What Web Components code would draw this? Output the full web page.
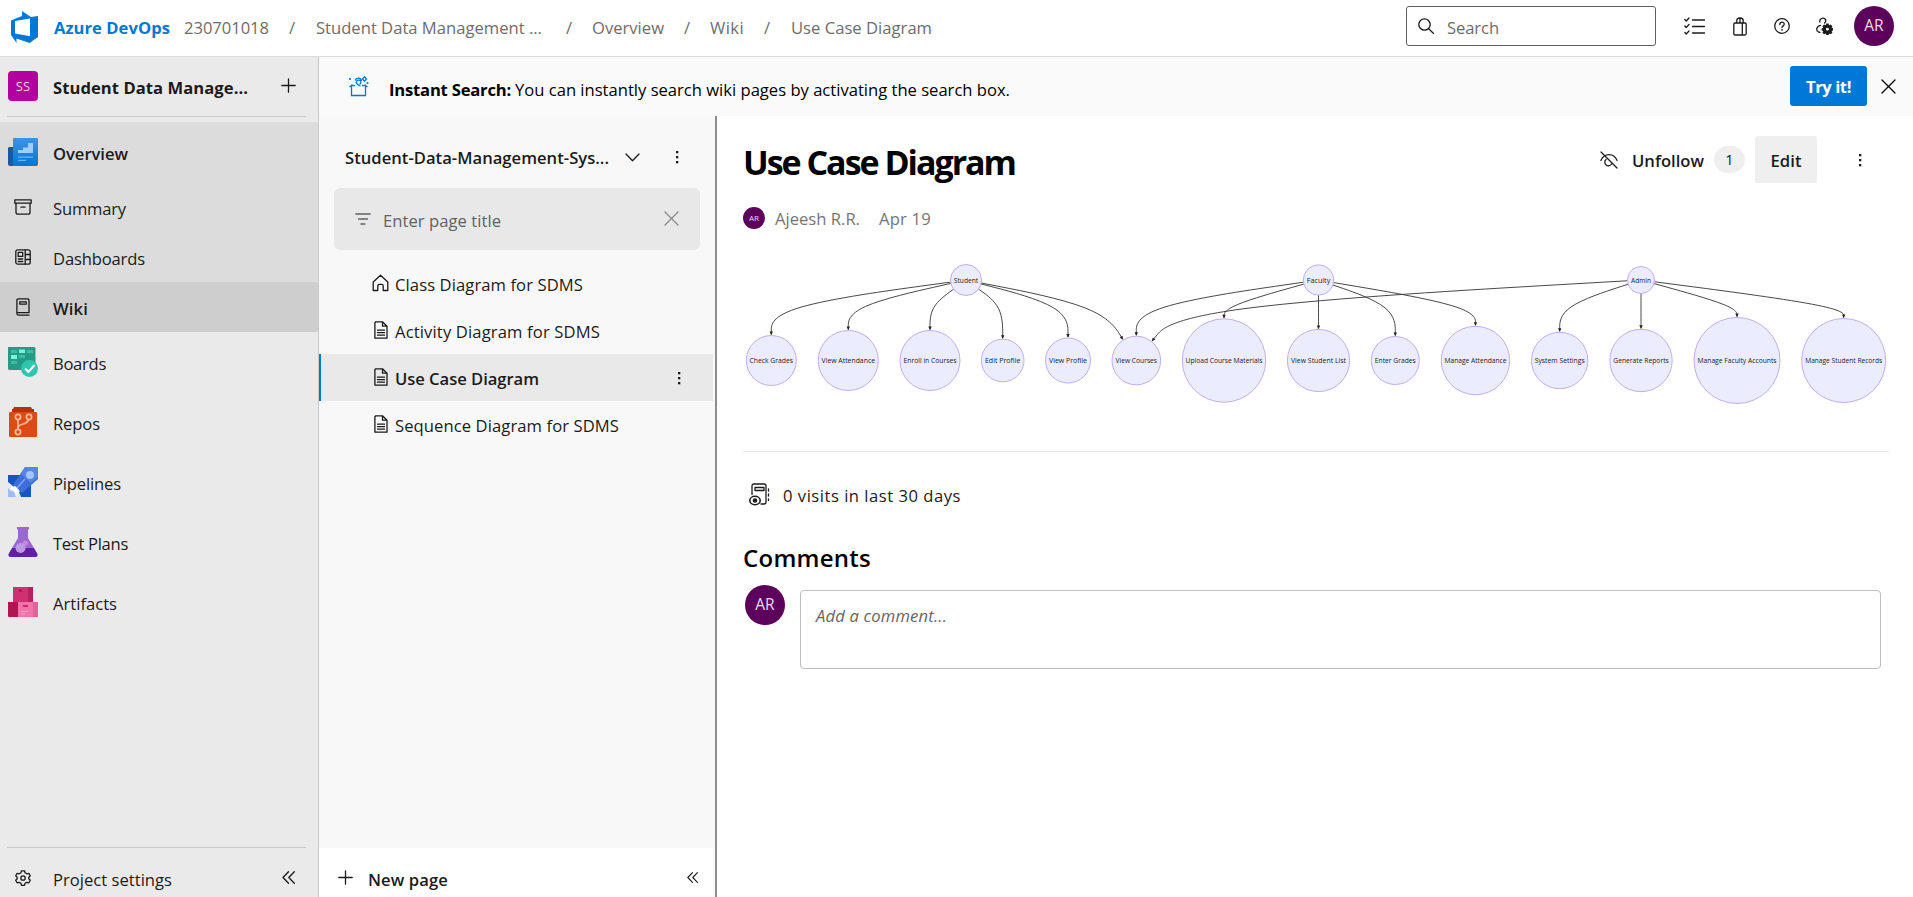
<!DOCTYPE html>
<html lang="en">
<head>
<meta charset="utf-8">
<title>Use Case Diagram - Azure DevOps</title>
<style>
html,body{margin:0;height:100%;overflow:hidden;background:#fff}
body{font-family:"Open Sans","Noto Sans",sans-serif;font-size:16.6px;color:#1b1b1b}
</style>
</head>
<body>
<devops-app></devops-app>
<script>
const define=(name,html,extra)=>{
  const t=document.createElement('template');t.innerHTML=html;
  customElements.define(name,class extends HTMLElement{
    constructor(){super();this.attachShadow({mode:'open'}).appendChild(t.content.cloneNode(true));}
    connectedCallback(){if(extra&&!this.ready){this.ready=true;extra(this,this.shadowRoot);}}
  });
};

/* Text run with a fixed measure: tracking is adjusted so the run fills the width in "w". */
const runs=[];
define('text-run',`<style>:host{display:block;flex:none;white-space:nowrap;line-height:24px;padding-top:var(--drop,3px)}</style><slot></slot>`,
el=>runs.push(el));
const fitRuns=()=>runs.forEach(el=>{
  const w=parseFloat(el.getAttribute('w'));if(!w)return;
  const r=document.createRange();r.selectNodeContents(el);
  const cur=r.getBoundingClientRect().width,n=el.textContent.length;
  el.style.letterSpacing=((w-cur)/n).toFixed(3)+'px';
  el.style.width=w+'px';
});

const S='fill="none" stroke="currentColor" stroke-width="1.3" stroke-linecap="round" stroke-linejoin="round"';
const ICONS={
logo:[27,32,`<path fill="#0078d4" d="M27 5v21l-8.500 6L5.500 27.500V32L0 24V9.500L11 5V0l9 6zM4 10v12.500l15 2.700V7.500z"/>`],
search:[16,16,`<g ${S}><circle cx="6.500" cy="6.500" r="5.700"/><path d="M10.700 10.700 15.300 15.300"/></g>`],
list:[21,18,`<g ${S}><path d="M8.500 3h12M8.500 9.500h12M8.500 16h12"/><path d="M.8 2.500 2.200 4 5 1M.8 9 2.200 10.500 5 7.500M.8 15.500 2.200 17 5 14"/></g>`],
bag:[14,19,`<g ${S}><path d="M2 6h10q1.200 0 1.200 1.200v9.300Q13.200 18 12 18H2Q.8 18 .8 16.500V7.200Q.8 6 2 6zM9.300 6v12M3.800 6V3.500Q3.800 1 7 1t3.200 2.500V6M7 1v5"/></g>`],
help:[16,16,`<g ${S}><circle cx="8" cy="8" r="7.300"/><path d="M5.800 6.500C5.800 3.200 10.400 3.400 10.200 6.300 10.100 7.800 8 8 8 9.600"/></g><circle cx="8" cy="11.800" r=".9" fill="currentColor"/>`],
usergear:[17,18,`<g ${S}><path d="M3.800 5C3.200 1.800 7 0 9 2c1.500 1.600.6 3-.4 4M4.500 8.300C0 9.500-.2 14 2.500 15l1.500.4"/></g><g transform="translate(11.400 12.200)"><path fill="currentColor" d="M-1.200-5.600h2.400l.4 1.700 1.700-.8 1.700 1.700-.8 1.600 1.600.6v2l-1.600.6.8 1.700-1.700 1.600-1.600-.8-.5 1.500h-2.400l-.5-1.500-1.600.8L-5 3.500l.8-1.700-1.600-.6v-2l1.600-.6L-5-3l1.700-1.700 1.700.8z"/><circle r="1.400" fill="#fff"/></g>`],
gift:[21,21,`<g fill="none" stroke="#0078d4" stroke-width="1.300"><path d="M3.500 8.500v11h14v-11M7 9.500H3.500L1.500 11M14 9.500h3.500l2 1.500"/><path d="M12.500 10C7 8 7.500 4.500 10.500 4.200S13.500 8 11.500 8M7 4.500C8.500 1 13 1.500 13.500 5M16.500.8l2 2.200-2 2.200-2-2.200z"/></g><g fill="#0078d4"><circle cx="2" cy="3" r="1.100"/><circle cx="19.500" cy="7" r="1.100"/></g>`],
close:[15,15,`<path ${S} d="M1 1 14 14M14 1 1 14"/>`],
plus:[15,15,`<path ${S} d="M7.500.8v13.400M.8 7.500h13.400"/>`],
chev:[15,9,`<path ${S} d="M1 1 7.500 7.800 14 1"/>`],
dots:[4,14,`<g fill="currentColor"><rect x="1" y="1" width="2.300" height="2.300"/><rect x="1" y="6" width="2.300" height="2.300"/><rect x="1" y="11" width="2.300" height="2.300"/></g>`],
filter:[16,12,`<path ${S} d="M.8 1h14.400M3.500 6h9M6 11h4"/>`],
home:[17,18,`<path ${S} d="M1.200 8 8.500 1.200 15.800 8v8.500h-4.600v-4.500c0-1.200-.5-1.700-1.500-1.700H7.300c-1 0-1.500.5-1.500 1.700v4.500H1.200z"/>`],
doc:[14,18,`<path ${S} d="M1.800.8H8.500L13 5.200v12H.9V1.800zM8.500.8v4.400H13M3.500 9.200h7M3.500 11.700h7M3.500 14.200h7"/>`],
eyeoff:[18,18,`<g ${S}><path d="M1 1l16 16M.9 9.500C3 4.500 6.500 3.700 9 3.700s6 1 8.100 5.800M6 8.500a3.600 3.600 0 1 0 5.500 4.500"/></g>`],
box:[18,16,`<g ${S}><path d="M.8.800h16.400v3.400H.8zM2 4.200v9c0 1.300.8 2 2 2h10c1.200 0 2-.7 2-2v-9M7 8.200h4"/></g>`],
dash:[16,16,`<g ${S}><rect x=".8" y=".8" width="14.400" height="14.400" rx="2"/><path d="M10.200.8v14.400M10.200 5.500h5M10.200 10.500h5M3.200 3.400h4.500v4H3.200zM3.200 10h4.500M3.200 12.500h4.500"/></g>`],
book:[14,18,`<path ${S} d="M13 14.500V2.500Q13 .8 11.500.8H2.600Q.9.800.9 2.500v13Q.9 17.200 2.600 17.200H13M1 14.700h12M3.800 3.800h6.400v2.400H3.800z"/>`],
gear:[16,16,`<g ${S}><path d="M6.500.8h3l.6 2 1.700 1 2.100-.5 1.400 2.500L13.800 7.300v1.500l1.500 1.500-1.400 2.500-2.100-.5-1.700 1-.6 2h-3l-.6-2-1.700-1-2.100.5-1.400-2.500 1.500-1.500V7.300L.7 5.800 2.100 3.300l2.100.5 1.700-1z"/><circle cx="8" cy="8" r="2.200"/></g>`],
fold:[13,13,`<path ${S} d="M6.500.8 1 6.500l5.500 5.700M12.300.8 6.800 6.500l5.500 5.700"/>`],
visits:[22,23,`<g ${S}><path d="M3 11.500V3Q3 1 5 1h10q2 0 2 2v16q0 2-2 2h-3M6 4.500h9v3H6z"/><path d="M19.500 6v2M19.500 11v2M19.500 16v1.500"/><ellipse cx="6" cy="17.500" rx="5.200" ry="4.200" stroke-width="1.600"/></g><circle cx="6" cy="17.500" r="2.300" fill="currentColor"/>`],
overview:[30,30,`<defs><linearGradient id="g" x2="0" y2="1"><stop stop-color="#3f93e4"/><stop offset="1" stop-color="#0078d4"/></linearGradient></defs><path fill="#1759a6" d="M1 10h5v19H2q-2 0-2-2V11z"/><path fill="url(#g)" d="M6 1h23q1 0 1 1v25q0 2-2 2H4q1 0 1-2V2q0-1 1-1z"/><path fill="#9ccdfc" d="M10 13h5v-2.500h5V6h5v10H10z"/><path fill="#6fb2f2" d="M10 19.500h15v1.300H10zM10 22.800h8v1.300h-8z"/>`],
boards:[30,30,`<path fill="#279a85" d="M0 0h26q1.500 0 1.500 1.500V23H1.500Q0 23 0 21.500z"/><path fill="#3bbda3" d="M3 3h6v3H3zM19 3h6v3h-6zM11 8h6v3h-6zM3 14h6v3H3z"/><path fill="#7df2dc" d="M11 2.500h6v3.500h-6zM3 8h6v4H3z"/><circle cx="21.500" cy="21.500" r="8.500" fill="#2cc7ae"/><path d="M17 21.500l3.500 3.500 6-7" fill="none" stroke="#fff" stroke-width="2.200"/>`],
repos:[30,30,`<path fill="#b83204" d="M6 0h17l1 2h2v4H4V2h1z"/><path fill="#dd4a16" d="M2 5h26q1 0 1 1v23q0 1-1 1H2q-1 0-1-1V6q0-1 1-1z"/><g fill="none" stroke="#ffb99b" stroke-width="1.700"><circle cx="10" cy="10" r="2.600"/><circle cx="21" cy="10" r="2.600"/><circle cx="10" cy="25" r="2.600"/><path d="M10 12.500v10M10 20q1-2 5-3t6-4.500"/></g>`],
pipelines:[30,30,`<path fill="#1556bd" d="M0 8h13L6 20 0 15zM11 25l12-9v14H13z"/><path fill="#3c6fdc" d="M17 0h13v12L14 26 5 18z"/><path fill="#5983e5" d="M17 0h13v10l-7 6-10-9z"/><circle cx="22" cy="8" r="4" fill="#a6c4fb"/><path d="M8 22l9-10" stroke="#82a5f2" stroke-width="1.500"/><path fill="#a1bcf4" d="M0 21l3 3q4-1 4 4l1 2H0z"/><path fill="#fff" d="M2 21l5-2 4 4-2 5-4-4z"/>`],
tests:[30,30,`<path fill="#9b68d2" d="M9 0h12v2l-1 1v8l6 10H4l6-10V3L9 2z"/><path fill="#5f20a3" d="M4 21h22l3.500 6q.5 3-2 3h-25Q0 30 .5 27z"/><circle cx="12.500" cy="21" r="5" fill="#bd98e6"/><circle cx="17.500" cy="16" r="2.600" fill="#cb83dc"/>`],
artifacts:[30,30,`<path fill="#cd3172" d="M5 0h20v15H5z"/><path fill="#b52262" d="M20 0h5v15h-5z"/><path fill="#b0164f" d="M0 15h10v15H1q-1 0-1-1z"/><path fill="#f073aa" d="M10 15h20v14q0 1-1 1H10z"/><path fill="#e75f9b" d="M25 15h5v15h-5z"/><path fill="#a51650" d="M10 4q2-3 5 0l-2.500 1zM6 18q2-1 4 0L8 20z"/><path fill="#cb286c" d="M15 18h5v2h-5z"/><path stroke="#ff9fd0" d="M13 24.500h7M13 27h4"/>`]
};
define('ui-icon',`<style>:host{display:block;flex:none}svg{display:block}</style>`,(el,root)=>{
  const [w,h,body]=ICONS[el.getAttribute('name')];
  const W=el.getAttribute('w')||w,H=el.getAttribute('h')||h;
  root.innerHTML+=`<svg width="${W}" height="${H}" viewBox="0 0 ${w} ${h}">${body}</svg>`;
});

define('user-avatar',`<style>:host{display:flex;flex:none;align-items:center;justify-content:center;width:var(--s,40px);height:var(--s,40px);border-radius:50%;background:#5c005c;color:#eddcec;font-size:var(--f,15.5px);line-height:1}</style><slot></slot>`);

define('top-bar',`<style>
:host{display:flex;align-items:center;height:56px;border-bottom:1px solid #dcdcdc;color:#6d6d6d;--drop:0;padding:0 19px 0 11px;background:#fff}
.b{color:#0078d4;font-weight:700;margin-left:16px}
.search{display:flex;align-items:center;box-sizing:border-box;width:250px;height:40px;border:1px solid #5f5f5f;border-radius:3px;padding-left:11px;margin-left:auto;margin-bottom:4px}
.search text-run{margin-left:13px;padding-top:3px}
.i{color:#1b1b1b;margin-bottom:4px}
</style>
<ui-icon name="logo" style="margin-bottom:3px"></ui-icon>
<text-run class="b" w="116">Azure DevOps</text-run>
<text-run w="85" style="margin-left:14px">230701018</text-run>
<text-run w="7" style="margin-left:20px">/</text-run>
<text-run w="226" style="margin-left:20px">Student Data Management ...</text-run>
<text-run w="7" style="margin-left:24px">/</text-run>
<text-run w="72" style="margin-left:19px">Overview</text-run>
<text-run w="7" style="margin-left:20px">/</text-run>
<text-run w="34" style="margin-left:19px">Wiki</text-run>
<text-run w="7" style="margin-left:20px">/</text-run>
<text-run w="141" style="margin-left:20px">Use Case Diagram</text-run>
<div class="search"><ui-icon class="i" style="margin:0 0 1px" name="search"></ui-icon><text-run w="52">Search</text-run></div>
<ui-icon class="i" name="list" style="margin-left:28px"></ui-icon>
<ui-icon class="i" name="bag" style="margin-left:28px"></ui-icon>
<ui-icon class="i" name="help" style="margin-left:27px"></ui-icon>
<ui-icon class="i" name="usergear" style="margin-left:26px"></ui-icon>
<user-avatar style="margin:0 0 4px 21px">AR</user-avatar>`);

define('nav-item',`<style>
:host{display:flex;align-items:center;height:60px;padding-left:8px}
:host([sub]){height:50px}
:host([on]){background:#cecece;border-radius:0 3px 3px 0}
div{width:30px;margin-right:15px;display:flex;justify-content:center}
</style><div><slot name="icon"></slot></div><slot></slot>`);

define('side-nav',`<style>
:host{display:flex;flex-direction:column;width:318px;flex:none;background:#eaeaea;border-right:1px solid #c8c8c8}
.proj{display:flex;align-items:center;height:59px;padding:0 0 2px 8px;box-sizing:border-box;--drop:4px}
.proj text-run{font-weight:700}
.tile{width:30px;height:30px;border-radius:4px;background:#b4009e;color:#f3c9ec;font-size:13px;display:flex;align-items:center;justify-content:center;margin-right:15px;flex:none}
.rule{height:1px;background:#cacaca;margin:0 12px 0 7px;flex:none}
.group{background:#dcdcdc;margin-top:5px}
.sb{font-weight:600}
.foot{margin-top:auto;flex:none}
.set{display:flex;align-items:center;height:49px;padding:11px 0 0 15px;box-sizing:border-box;--drop:4px}
.set .f{margin-left:110px;margin-bottom:1px}
.set text-run{margin-left:22px}
</style>
<div class="proj"><div class="tile">SS</div><text-run w="195">Student Data Manage...</text-run><ui-icon name="plus" style="margin-left:33px"></ui-icon></div>
<div class="rule"></div>
<div class="group">
<nav-item><ui-icon slot="icon" name="overview"></ui-icon><text-run class="sb" w="75">Overview</text-run></nav-item>
<nav-item sub><ui-icon slot="icon" name="box"></ui-icon><text-run w="73">Summary</text-run></nav-item>
<nav-item sub><ui-icon slot="icon" name="dash"></ui-icon><text-run w="92">Dashboards</text-run></nav-item>
<nav-item sub on><ui-icon slot="icon" name="book"></ui-icon><text-run class="sb" w="35">Wiki</text-run></nav-item>
</div>
<nav-item><ui-icon slot="icon" name="boards"></ui-icon><text-run w="53">Boards</text-run></nav-item>
<nav-item><ui-icon slot="icon" name="repos"></ui-icon><text-run w="47">Repos</text-run></nav-item>
<nav-item><ui-icon slot="icon" name="pipelines"></ui-icon><text-run w="68">Pipelines</text-run></nav-item>
<nav-item><ui-icon slot="icon" name="tests"></ui-icon><text-run w="75">Test Plans</text-run></nav-item>
<nav-item><ui-icon slot="icon" name="artifacts"></ui-icon><text-run w="64">Artifacts</text-run></nav-item>
<div class="foot"><div class="rule"></div><div class="set"><ui-icon name="gear"></ui-icon><text-run w="119">Project settings</text-run><ui-icon class="f" name="fold"></ui-icon></div></div>`);

define('tip-banner',`<style>
:host{display:flex;align-items:center;height:59px;flex:none;background:#fafafa;padding:0 17px 0 29px;color:#000}
.b{font-weight:700;margin-left:20px}
.btn{margin-left:auto;width:77px;height:40px;border-radius:3px;background:#0078d7;color:#fff;font-weight:700;display:flex;align-items:center;justify-content:center;--drop:2px}
</style>
<ui-icon name="gift"></ui-icon><text-run class="b" w="122" style="padding-top:7px">Instant Search:</text-run><text-run w="495" style="margin-left:4px;padding-top:7px">You can instantly search wiki pages by activating the search box.</text-run>
<div class="btn" style="margin-top:-1px"><text-run w="45">Try it!</text-run></div><ui-icon name="close" style="margin-left:14px;margin-bottom:1px"></ui-icon>`);

define('tree-item',`<style>
:host{display:flex;align-items:center;height:47px;padding:0 32px 0 53px;box-sizing:border-box}
:host([on]){background:#e9e9e9;box-shadow:inset 2px 0 #0078d4;font-weight:600}
div{width:17px;margin-right:6px;display:flex;justify-content:center;margin-bottom:2px}
.end{margin:0 0 0 auto;width:4px}
</style><div><slot name="icon"></slot></div><slot></slot><div class="end"><slot name="end"></slot></div>`);

define('wiki-tree',`<style>
:host{display:flex;flex-direction:column;width:394px;flex:none;background:#f8f8f8;border-right:2px solid #8d8d8d;padding-right:2px}
.head{display:flex;align-items:center;height:72px;padding:10px 0 0 26px;box-sizing:border-box;font-weight:600}
.filter{display:flex;align-items:center;height:62px;margin:0 13px 10px 15px;border-radius:6px;background:#e8e8e8;padding:0 21px;color:#616161;--drop:4px}
.filter text-run{margin-left:12px}
.foot{margin:auto 0 0;height:49px;background:#fff;display:flex;align-items:center;padding:12px 0 0 19px;box-sizing:border-box;font-weight:600}
</style>
<div class="head"><text-run w="264" style="padding-top:2px">Student-Data-Management-Sys...</text-run><ui-icon name="chev" style="margin-left:16px"></ui-icon><ui-icon name="dots" style="margin-left:35px"></ui-icon></div>
<div class="filter"><ui-icon name="filter" style="margin-bottom:1px"></ui-icon><text-run w="118">Enter page title</text-run><ui-icon name="close" style="margin:0 0 1px auto;color:#8a8a8a"></ui-icon></div>
<tree-item><ui-icon slot="icon" name="home"></ui-icon><text-run w="188">Class Diagram for SDMS</text-run></tree-item>
<tree-item><ui-icon slot="icon" name="doc"></ui-icon><text-run w="205">Activity Diagram for SDMS</text-run></tree-item>
<tree-item on><ui-icon slot="icon" name="doc"></ui-icon><text-run w="144">Use Case Diagram</text-run><ui-icon slot="end" name="dots"></ui-icon></tree-item>
<tree-item><ui-icon slot="icon" name="doc"></ui-icon><text-run w="224">Sequence Diagram for SDMS</text-run></tree-item>
<div class="foot"><ui-icon name="plus" style="margin-bottom:2px"></ui-icon><text-run w="80" style="margin-left:15px">New page</text-run><ui-icon name="fold" w="11" h="11" style="margin:0 15px 3px auto"></ui-icon></div>`);

/* Use case graph: each edge is a B-spline through one bend point at y = 306.5. */
define('usecase-diagram',`<style>:host{display:block;height:185px}svg{display:block}
text{font:500 7.500px "Open Sans",sans-serif;fill:#222;text-anchor:middle}
circle{fill:#ececff;stroke:#bba5ea;stroke-width:.9}.e{fill:none;stroke:#333;stroke-width:.9}.a{fill:#222}</style>`,(el,root)=>{
  const N={s:['Student',966,280,15.5,24.5],f:['Faculty',1318.5,280,15.2,23.5],a:['Admin',1641,280,13.5,20],
  cg:['Check Grades',771.3,360.5,25,43.5],va:['View Attendance',848.3,360.5,30,53.5],ec:['Enroll in Courses',930,360.5,30,53],
  ep:['Edit Profile',1002.7,360.5,21.3,35.5],vp:['View Profile',1068,360.5,22.5,38],vc:['View Courses',1136.3,360.5,24.3,41.5],
  um:['Upload Course Materials',1224,360.5,41.7,77],vs:['View Student List',1318.5,360.5,31.1,55],eg:['Enter Grades',1395.3,360.5,24,41],
  ma:['Manage Attendance',1475.5,360.5,34.2,62],ss:['System Settings',1559.7,360.5,28.2,50],gr:['Generate Reports',1641,360.5,31.2,55.5],
  mf:['Manage Faculty Accounts',1737,360.5,43,79],mr:['Manage Student Records',1843.7,360.5,42,77]};
  const E=['s cg','s va','s ec','s ep','s vp','s vc 1102','f vc','f um','f vs','f eg','f ma','a vc 1180','a ss','a gr','a mf','a mr'];
  const hit=(n,p,g)=>{const dx=p[0]-n[1],dy=p[1]-n[2],d=Math.hypot(dx,dy);return[n[1]+dx/d*(n[3]+g),n[2]+dy/d*(n[3]+g)]};
  let out='';
  E.forEach(s=>{
    const [u,v,x]=s.split(' '),A=N[u],B=N[v],b=[x?+x:B[1],306.5],a=hit(A,b,0),c=hit(B,b,1);
    const m=(i,j,k)=>[0,1].map(q=>(a[q]*i+b[q]*j+c[q]*k)/(i+j+k)).map(z=>z.toFixed(2)).join();
    out+=`<path class="e" d="M${a}L${m(5,1,0)}C${m(2,1,0)} ${m(1,2,0)} ${m(1,4,1)}C${m(0,2,1)} ${m(0,1,2)} ${m(0,1,5)}L${c}"/>`;
    const t=Math.atan2(c[1]-b[1],c[0]-b[0])*180/Math.PI;
    out+=`<path class="a" transform="translate(${c}) rotate(${t})" d="M.8 0-3-1.700v3.400z"/>`;
  });
  for(const k in N){const [t,x,y,r,w]=N[k];out+=`<circle cx="${x}" cy="${y}" r="${r}"/><text x="${x}" y="${y+2.7}" textLength="${w}" lengthAdjust="spacingAndGlyphs">${t}</text>`;}
  root.innerHTML+=`<svg width="1146" height="160" viewBox="743 254 1146 160">${out}</svg>`;
});

define('comment-box',`<style>
:host{display:flex}
.in{box-sizing:border-box;width:1081px;height:79px;border:1px solid #bdbdbd;border-radius:4px;margin:5px 0 0 15px;padding:10px 15px;font-style:italic;color:#666;--drop:3px}
</style><user-avatar style="margin-left:2px">AR</user-avatar><div class="in"><text-run w="131">Add a comment...</text-run></div>`);

define('page-view',`<style>
:host{display:block;flex:1;min-width:0;padding:0 24px 0 26px;background:#fff}
.head{display:flex;align-items:center;height:91px;box-sizing:border-box}
.title{font-size:34px;font-weight:700;color:#000;line-height:44px;--drop:0}
.act{margin-left:auto;display:flex;align-items:center;font-weight:600;padding:0 27px 4px 0}
.cnt{width:31px;height:27px;border-radius:14px;background:#efefef;font-weight:400;font-size:14.500px;display:flex;align-items:center;justify-content:center;margin:0 10px}
.edit{width:62px;height:47px;border-radius:3px;background:#efefef;display:flex;align-items:center;justify-content:center;margin-right:41px}
.by{display:flex;align-items:center;height:22px;color:#757575;margin-bottom:25px;--drop:2px}
.rule{height:1px;background:#e6e6e6;margin:12px 0 31px}
.vis{display:flex;align-items:center;height:23px;padding-left:6px;--drop:2px}
h2{font-size:24px;font-weight:600;color:#000;margin:40px 0 7px;height:32px;--drop:0}
</style>
<div class="head"><text-run class="title" w="272"><span style="line-height:44px">Use Case Diagram</span></text-run>
<div class="act"><ui-icon name="eyeoff"></ui-icon><text-run w="72" style="margin-left:14px">Unfollow</text-run><div class="cnt">1</div><div class="edit"><text-run w="31">Edit</text-run></div><ui-icon name="dots"></ui-icon></div></div>
<div class="by"><user-avatar style="--s:22px;--f:8px">AR</user-avatar><text-run w="85" style="margin-left:10px">Ajeesh R.R.</text-run><text-run w="52" style="margin-left:19px">Apr 19</text-run></div>
<usecase-diagram></usecase-diagram>
<div class="rule"></div>
<div class="vis"><ui-icon name="visits"></ui-icon><text-run w="178" style="margin-left:12px">0 visits in last 30 days</text-run></div>
<h2><text-run w="128">Comments</text-run></h2>
<comment-box></comment-box>`);

define('devops-app',`<style>
:host{display:flex;flex-direction:column;height:100vh;background:#fff}
.row{display:flex;flex:1;min-height:0}
.col{display:flex;flex-direction:column;flex:1;min-width:0}
</style>
<top-bar></top-bar>
<div class="row"><side-nav></side-nav><div class="col"><tip-banner></tip-banner><div class="row"><wiki-tree></wiki-tree><page-view></page-view></div></div></div>`);
fitRuns();
</script>
</body>
</html>
